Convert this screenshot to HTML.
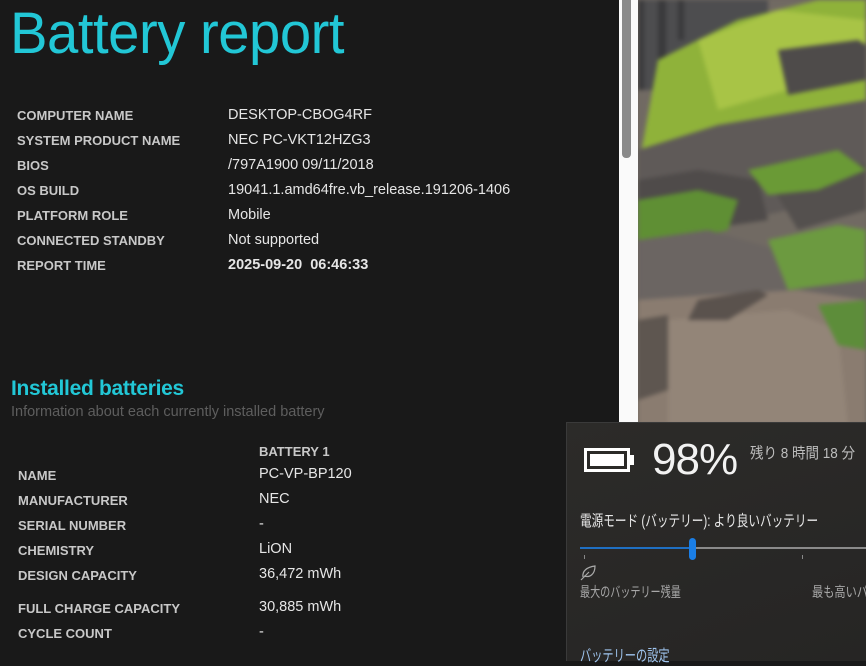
<!DOCTYPE html>
<html><head><meta charset="utf-8"><style>
*{margin:0;padding:0;box-sizing:border-box}
body{width:866px;height:661px;overflow:hidden;background:#191919;position:relative;font-family:"Liberation Sans","Noto Sans CJK JP",sans-serif}
.a{position:absolute;white-space:nowrap}
.t{left:10px;top:0px;font-size:58px;color:#22c7d6;transform:scaleX(0.97);transform-origin:left top;letter-spacing:-0.5px}
.l{font-size:13px;font-weight:bold;color:#c8c8c8}
.v{font-size:14.5px;color:#e6e6e6}
.photo{left:638px;top:0;width:228px;height:425px;overflow:hidden;background:#6d6660}
.fly{left:566px;top:422px;width:300px;height:239px;background:linear-gradient(160deg,#2c2b29,#262524);border-left:1px solid #3a3a3a;border-top:1px solid #3a3a3a}
.j{color:#e8e8e8}
.n{transform-origin:left top}
</style></head><body>
<div class="a t">Battery report</div>

<div class="a l" style="left:17px;top:108px">COMPUTER NAME</div><div class="a v" style="left:228px;top:107px">DESKTOP-CBOG4RF</div>
<div class="a l" style="left:17px;top:133px">SYSTEM PRODUCT NAME</div><div class="a v" style="left:228px;top:132px">NEC PC-VKT12HZG3</div>
<div class="a l" style="left:17px;top:158px">BIOS</div><div class="a v" style="left:228px;top:157px">/797A1900 09/11/2018</div>
<div class="a l" style="left:17px;top:183px">OS BUILD</div><div class="a v" style="left:228px;top:182px">19041.1.amd64fre.vb_release.191206-1406</div>
<div class="a l" style="left:17px;top:208px">PLATFORM ROLE</div><div class="a v" style="left:228px;top:207px">Mobile</div>
<div class="a l" style="left:17px;top:233px">CONNECTED STANDBY</div><div class="a v" style="left:228px;top:232px">Not supported</div>
<div class="a l" style="left:17px;top:258px">REPORT TIME</div><div class="a v" style="left:228px;top:257px;font-weight:bold">2025-09-20&nbsp; 06:46:33</div>

<div class="a" style="left:11px;top:377px;font-size:21px;color:#22c7d6;font-weight:bold;letter-spacing:-0.3px">Installed batteries</div>
<div class="a" style="left:11px;top:404px;font-size:14.5px;color:#5e5e5e">Information about each currently installed battery</div>
<div class="a l" style="left:259px;top:444px">BATTERY 1</div>
<div class="a l" style="left:18px;top:468px">NAME</div><div class="a v" style="left:259px;top:466px">PC-VP-BP120</div>
<div class="a l" style="left:18px;top:493px">MANUFACTURER</div><div class="a v" style="left:259px;top:491px">NEC</div>
<div class="a l" style="left:18px;top:518px">SERIAL NUMBER</div><div class="a v" style="left:259px;top:516px">-</div>
<div class="a l" style="left:18px;top:543px">CHEMISTRY</div><div class="a v" style="left:259px;top:541px">LiON</div>
<div class="a l" style="left:18px;top:568px">DESIGN CAPACITY</div><div class="a v" style="left:259px;top:566px">36,472 mWh</div>
<div class="a l" style="left:18px;top:601px">FULL CHARGE CAPACITY</div><div class="a v" style="left:259px;top:599px">30,885 mWh</div>
<div class="a l" style="left:18px;top:626px">CYCLE COUNT</div><div class="a v" style="left:259px;top:624px">-</div>

<div class="a" style="left:619px;top:0;width:19px;height:425px;background:#fafafa"></div>
<div class="a" style="left:622px;top:0;width:9px;height:158px;background:#8a8a8a;border-radius:0 0 4px 4px"></div>

<div class="a photo">
<svg width="228" height="425" viewBox="0 0 228 425" style="filter:blur(2px)">
<rect width="228" height="425" fill="#716a63"/>
<rect x="0" y="0" width="130" height="90" fill="#4d4d4f"/>
<path d="M0 0h6v90H0zM20 0h8v60h-8zM40 0h6v40h-6z" fill="#3a3a3c"/>
<path d="M20 60 L100 20 L180 0 L228 0 L228 110 L180 120 L120 140 L60 160 L0 170 Z" fill="#8fb23a"/>
<path d="M60 40 L140 10 L228 20 L228 70 L150 90 L80 110 Z" fill="#a8c446"/>
<path d="M0 150 L80 125 L228 100 L228 190 L150 210 L60 230 L0 240 Z" fill="#5f5a58"/>
<path d="M140 50 L220 40 L228 45 L228 80 L150 95 Z" fill="#4e4b4a"/>
<path d="M0 180 L60 170 L120 180 L130 220 L60 230 L0 235Z" fill="#4f4b4a"/>
<path d="M130 180 L200 160 L228 165 L228 210 L160 230Z" fill="#54504e"/>
<path d="M0 200 L60 190 L100 200 L90 230 L0 250Z" fill="#5f8f34"/>
<path d="M110 170 L200 150 L228 170 L180 190 L130 195Z" fill="#6a9a36"/>
<path d="M0 240 L70 230 L140 250 L200 230 L228 240 L228 300 L150 300 L60 300 L0 310Z" fill="#6b6562"/>
<path d="M130 240 L200 225 L228 230 L228 280 L150 290Z" fill="#6c9a40"/>
<path d="M0 300 L70 295 L160 290 L228 300 L228 425 L0 425Z" fill="#8a7c70"/>
<path d="M0 320 L30 315 L30 390 L0 400Z" fill="#5e5650"/>
<path d="M30 320 L150 310 L200 330 L210 425 L30 425Z" fill="#938578"/>
<path d="M180 305 L228 300 L228 350 L200 345Z" fill="#5d8d3a"/>
<path d="M60 300 L120 290 L130 295 L90 320 L50 320Z" fill="#5a524d"/>
</svg>
</div>

<div class="a fly">
<div class="a" style="left:17px;top:25px;width:46px;height:24px;border:3px solid #fff;padding:3px"><div style="width:100%;height:100%;background:#fff"></div></div>
<div class="a" style="left:63px;top:32px;width:4px;height:10px;background:#fff"></div>
<div class="a j" style="left:85px;top:12px;font-size:44px;color:#f2f2f2;letter-spacing:-1px">98%</div>
<div class="a n" style="left:183px;top:19px;font-size:15px;color:#bdbdbd;transform:scaleX(0.9)">残り 8 時間 18 分</div>
<div class="a j n" style="left:13px;top:86px;font-size:15.5px;transform:scaleX(0.75)">電源モード (バッテリー): より良いバッテリー</div>
<div class="a" style="left:13px;top:124px;width:113px;height:2px;background:#1f6fc2"></div>
<div class="a" style="left:126px;top:124px;width:174px;height:2px;background:#8a8a8a"></div>
<div class="a" style="left:122px;top:115px;width:7px;height:22px;background:#1a7ee6;border-radius:4px"></div>
<div class="a" style="left:17px;top:132px;width:1px;height:4px;background:#888"></div>
<div class="a" style="left:235px;top:132px;width:1px;height:4px;background:#888"></div>
<svg class="a" style="left:13px;top:141px" width="17" height="17" viewBox="0 0 17 17" fill="none" stroke="#aaa" stroke-width="1.2"><path d="M3 13 C2 7 7 3 15 2 C15 10 10 14 4 12 M1 16 L9 8"/></svg>
<div class="a n" style="left:13px;top:159px;font-size:14px;color:#a8a8a8;transform:scaleX(0.72)">最大のバッテリー残量</div>
<div class="a n" style="left:245px;top:159px;font-size:14px;color:#a8a8a8;transform:scaleX(0.8)">最も高いパフォ</div>
<div class="a n" style="left:13px;top:219px;font-size:16px;color:#9fc4ee;transform:scaleX(0.7)">バッテリーの設定</div>
</div>
</body></html>
